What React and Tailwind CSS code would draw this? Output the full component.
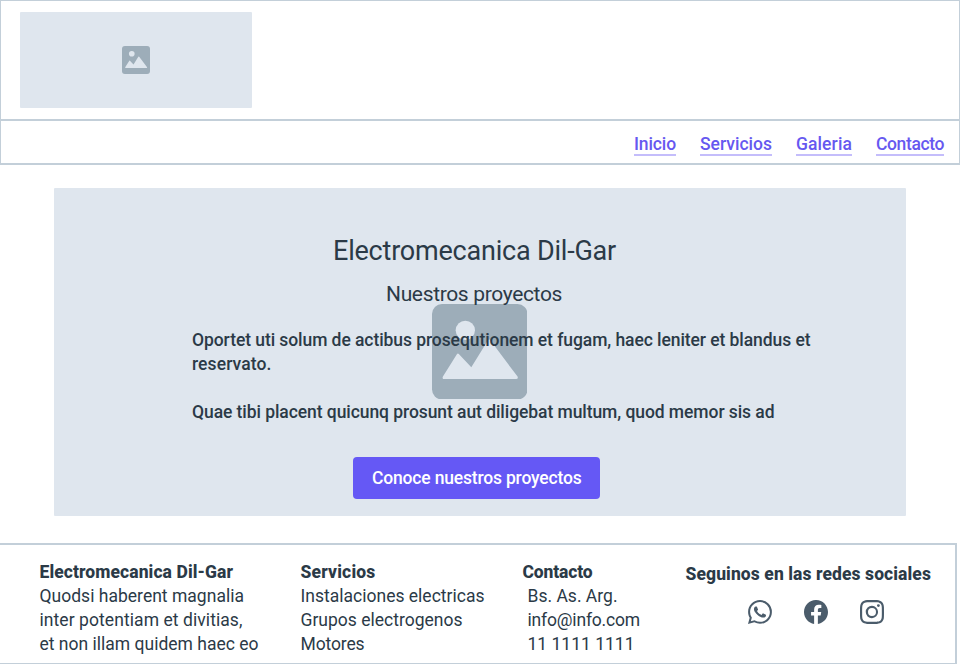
import { useLayoutEffect, useRef, useState } from "react";
import { BsWhatsapp, BsFacebook, BsInstagram } from "react-icons/bs";

// One line of text whose letters are spread or tightened to fill `width` pixels.
function Line({ width, children, className = "" }) {
  const ref = useRef(null);
  const [spacing, setSpacing] = useState(0);
  useLayoutEffect(() => {
    const natural = ref.current.getBoundingClientRect().width;
    setSpacing((width - natural) / children.length);
  }, []);
  return (
    <span className={`block whitespace-nowrap ${className}`}>
      <span ref={ref} style={{ letterSpacing: `${spacing}px` }}>
        {children}
      </span>
    </span>
  );
}

function PictureIcon({ className }) {
  return (
    <svg viewBox="0 0 96 96" className={className}>
      <rect width="96" height="96" rx="10" fill="#9dadb9" />
      <circle cx="33.5" cy="26.5" r="9.7" fill="#dfe6ee" />
      <path
        d="M11 73 L25 50.500 Q26 49 27.200 50.500 L39.500 63.500 L56 37 Q57.500 34.500 59 37 L86 73 Q87 75.500 84.500 75.500 H12.500 Q9.800 75.500 11 73Z"
        fill="#dfe6ee"
      />
    </svg>
  );
}

const links = [
  ["Inicio", 42],
  ["Servicios", 72],
  ["Galeria", 56],
  ["Contacto", 68],
];

export default function App() {
  return (
    <div className="flex h-[664px] w-[960px] flex-col overflow-hidden bg-white font-['Roboto',sans-serif] text-[17.5px] leading-6 font-medium text-[#2b3a47]">
      <header className="h-[165px] shrink-0 border border-b-2 border-[#c3cfd9]">
        <div className="h-[120px] border-b-2 border-[#c3cfd9] pt-[11px] pl-[19px]">
          <div className="flex h-24 w-[232px] items-center justify-center rounded-[1px] bg-[#dfe6ee]">
            <PictureIcon className="size-7" />
          </div>
        </div>
        <nav className="flex justify-end gap-6 pt-[11px] pr-[15px] text-[#6658f0]">
          {links.map(([label, width]) => (
            <a key={label} className="h-6 border-b-2 border-[#c4bdfb]">
              <Line width={width}>{label}</Line>
            </a>
          ))}
        </nav>
      </header>

      <main className="relative mt-[23px] ml-[54px] h-[328px] w-[852px] shrink-0 rounded-[1px] bg-[#dfe6ee]">
        <PictureIcon className="absolute top-[115.5px] left-[377.5px] size-[95.5px]" />
        <div className="relative flex flex-col pt-[47px]">
          <h1 className="ml-[279px] text-[27px] leading-8 font-[450]">
            <Line width={283}>Electromecanica Dil-Gar</Line>
          </h1>
          <h2 className="mt-[15px] ml-[332px] text-[21px] leading-6 font-[450]">
            <Line width={176}>Nuestros proyectos</Line>
          </h2>
          <div className="mt-[22px] ml-[138px]">
            <Line width={618.5}>Oportet uti solum de actibus prosequtionem et fugam, haec leniter et blandus et</Line>
            <Line width={79.5}>reservato.</Line>
            <Line width={582.5} className="mt-6">Quae tibi placent quicunq prosunt aut diligebat multum, quod memor sis ad</Line>
          </div>
          <button className="mt-[33px] ml-[299px] h-[42px] w-[247px] rounded bg-[#6558f5] pl-[19px] text-left text-white">
            <Line width={209.5}>Conoce nuestros proyectos</Line>
          </button>
        </div>
      </main>

      <footer className="mt-[27px] flex h-[121px] w-[957px] shrink-0 border-t-2 border-r-2 border-b border-[#c3cfd9] pt-[15px] font-[450]">
        <section className="ml-[39.5px] w-[261px]">
          <h3 className="font-extrabold">
            <Line width={193.5}>Electromecanica Dil-Gar</Line>
          </h3>
          <Line width={204.5}>Quodsi haberent magnalia</Line>
          <Line width={203}>inter potentiam et divitias,</Line>
          <Line width={219}>et non illam quidem haec eo</Line>
        </section>
        <section className="w-[222px]">
          <h3 className="font-extrabold">
            <Line width={75}>Servicios</Line>
          </h3>
          <Line width={184}>Instalaciones electricas</Line>
          <Line width={162}>Grupos electrogenos</Line>
          <Line width={64}>Motores</Line>
        </section>
        <section className="w-[163px]">
          <h3 className="font-extrabold">
            <Line width={70}>Contacto</Line>
          </h3>
          <div className="pl-[5px]">
            <Line width={90}>Bs. As. Arg.</Line>
            <Line width={112.5}>info@info.com</Line>
            <Line width={107}>11 1111 1111</Line>
          </div>
        </section>
        <section className="pt-0.5">
          <h3 className="font-extrabold">
            <Line width={245.5}>Seguinos en las redes sociales</Line>
          </h3>
          <div className="mt-[14px] ml-[62.5px] flex gap-8 text-[#4b5c6b]">
            <BsWhatsapp className="size-6" />
            <BsFacebook className="size-6" />
            <BsInstagram className="size-6" />
          </div>
        </section>
      </footer>
    </div>
  );
}
